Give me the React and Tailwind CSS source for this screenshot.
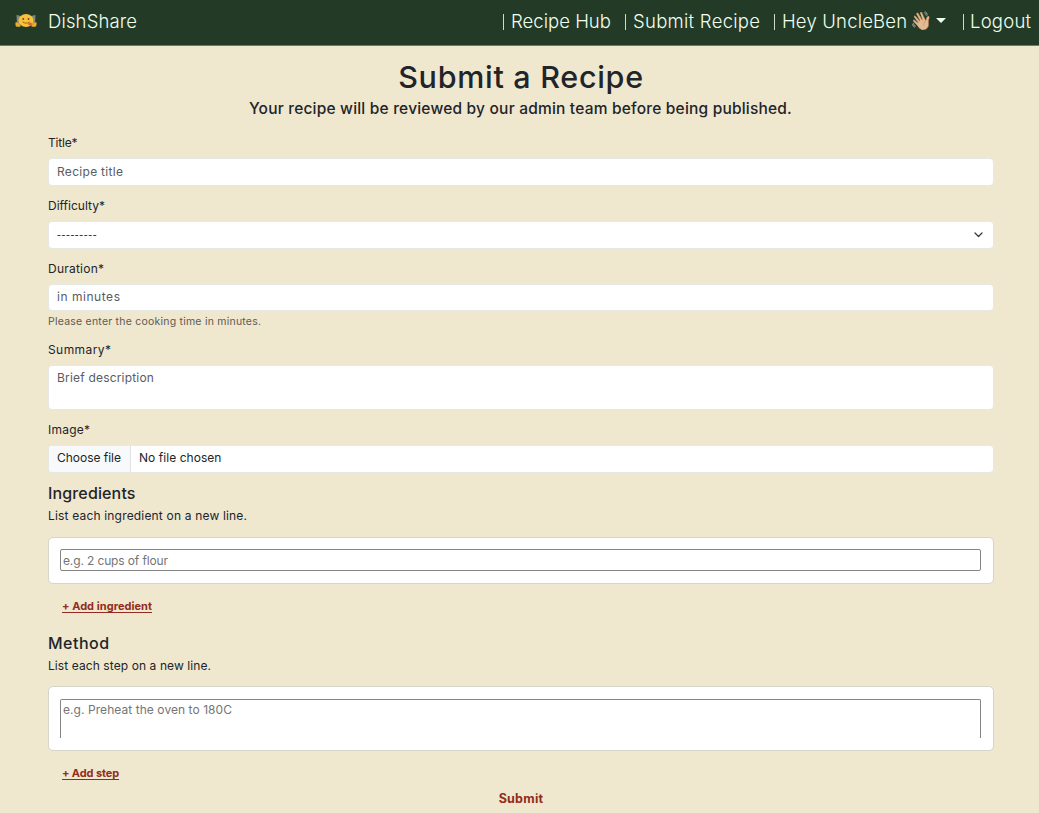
import clsx from 'clsx';

const labelStyle = 'h-5 text-[12px] leading-5 text-[#212529]';
const controlStyle = 'w-full rounded-[4px] border border-[#e6e8e4] bg-white px-2 text-[12px] placeholder:text-[#595c5f] outline-none';

function Logo() {
  return (
    <svg width="22" height="16" viewBox="0 0 22 16" className="mr-[11px] shrink-0">
      <path d="M1.500 2 6 3v8H2zM20.500 2 16 3v8h4z" fill="#7f8c7c" />
      <ellipse cx="11" cy="7.500" rx="7.500" ry="6.500" fill="#f9c23a" />
      <path d="M.5 9.500c1.200-.8 2.600.2 4 1.400 1.600 1.300 1.700 2.600 0 2.900H1.700C.6 13.500.3 12 .5 9.500zM21.500 9.500c-1.200-.8-2.600.2-4 1.400-1.600 1.300-1.700 2.600 0 2.900h2.800c1.100-.3 1.400-1.800 1.200-4.300z" fill="#f3a827" />
      <circle cx="8.300" cy="6" r="0.900" fill="#6b4413" />
      <circle cx="13.500" cy="6" r="0.900" fill="#6b4413" />
      <path d="M7.500 8.800c1.800 1.800 5.200 1.800 7 0" fill="none" stroke="#9a5a18" strokeWidth="0.900" />
      <ellipse cx="15" cy="11" rx="2" ry="1.400" fill="#e2643f" />
    </svg>
  );
}

function NavItem({ children, className }) {
  return (
    <a href="#" className={clsx('flex h-full items-center', className)}>
      <span className="mt-[2px] h-[16px] w-px shrink-0 bg-[#cfdacf]" />
      {children}
    </a>
  );
}

function Header() {
  return (
    <header className="flex h-[46px] items-center border-b border-[#6f7c5c] bg-[#233b26] pb-[3px] text-[18.5px] leading-[26px] font-light whitespace-nowrap text-[#f0fff0]">
      <a href="#" className="flex items-center pl-[15px]">
        <Logo />
        <span className="tracking-[0.14px]">DishShare</span>
      </a>
      <nav className="ml-auto flex h-full items-center">
        <NavItem className="w-[122px]"><span className="ml-[7px] tracking-[0.03px]">Recipe Hub</span></NavItem>
        <NavItem className="w-[149px]"><span className="ml-[7px] tracking-[0.28px]">Submit Recipe</span></NavItem>
        <NavItem className="w-[189px]">
          <span className="ml-[7px] tracking-[0.18px]">Hey UncleBen</span>
          <span className="ml-[3px] w-[23px] text-[18px]">👋🏼</span>
          <svg width="10" height="5" viewBox="0 0 10 5" className="mb-[2px] ml-[3px]"><path d="M0 0h10L5 5z" fill="#f0fff0" /></svg>
        </NavItem>
        <NavItem className="w-[76px]"><span className="ml-[6px] tracking-[0.22px]">Logout</span></NavItem>
      </nav>
    </header>
  );
}

function AddLink({ children, className }) {
  return (
    <a href="#" className={clsx('ml-[14px] block h-5 w-fit text-[11px] leading-5 font-bold text-[#902d20] underline underline-offset-[1.5px]', className)}>
      {children}
    </a>
  );
}

export default function App() {
  return (
    <div className="h-[813px] overflow-hidden bg-[#f0e7cf] font-['Inter',sans-serif] text-[#212529]">
      <Header />
      <main>
        <h1 className="mt-[11px] h-10 pl-[3px] text-center text-[30.5px] leading-10 font-medium tracking-[0.71px]">Submit a Recipe</h1>
        <h2 className="h-6 pl-[2px] text-center text-[15.5px] leading-6 font-medium tracking-[0.2px]">Your recipe will be reviewed by our admin team before being published.</h2>
        <form className="mr-[45px] ml-[48px] flex flex-col" onSubmit={(e) => e.preventDefault()}>
          <label className={clsx(labelStyle, 'mt-3 tracking-[-0.2px]')}>Title*</label>
          <input className={clsx(controlStyle, 'mt-[5px] h-[28px] pb-[2px] tracking-[0.3px]')} placeholder="Recipe title" />

          <label className={clsx(labelStyle, 'mt-[10px] tracking-[0.02px]')}>Difficulty*</label>
          <div className={clsx(controlStyle, 'mt-[5px] flex h-[28px] items-center justify-between pr-[10px]')}>
            <span className="pb-px font-['Open_Sans'] tracking-[0.6px] text-[#30363a]">---------</span>
            <svg width="9" height="6" viewBox="0 0 9 6"><path d="M1 1l3.500 3.500L8 1" fill="none" stroke="#343a40" strokeWidth="1.300" strokeLinecap="round" strokeLinejoin="round" /></svg>
          </div>

          <label className={clsx(labelStyle, 'mt-[10px] tracking-[0.23px]')}>Duration*</label>
          <input className={clsx(controlStyle, 'mt-[5px] h-[27px] pb-[2px] tracking-[0.54px]')} placeholder="in minutes" />
          <p className="mt-px h-5 text-[10.5px] leading-5 tracking-[0.225px] text-[#5d5b53]">Please enter the cooking time in minutes.</p>

          <label className={clsx(labelStyle, 'mt-2 tracking-[0.42px]')}>Summary*</label>
          <textarea className={clsx(controlStyle, 'mt-[5px] h-[45px] resize-none py-[3px] leading-[18px] tracking-[0.19px]')} placeholder="Brief description" />

          <label className={clsx(labelStyle, 'mt-[10px] tracking-[0.23px]')}>Image*</label>
          <div className="mt-[5px] flex h-[28px] overflow-hidden rounded-[4px] border border-[#e6e8e4] bg-white text-[12px] leading-[23px]">
            <span className="w-[82px] border-r border-[#dee2e6] bg-[#f8f9fa] pl-2 tracking-[-0.02px]">Choose file</span>
            <span className="pl-2 tracking-[0.05px]">No file chosen</span>
          </div>

          <h3 className="mt-[10px] h-5 text-[16px] leading-5 font-medium tracking-[0.14px]">Ingredients</h3>
          <p className="mt-[3px] h-5 text-[12px] leading-5 tracking-[0.176px]">List each ingredient on a new line.</p>
          <div className="mt-[11px] h-[47px] rounded-[5px] border border-[#d5d5cb] bg-white px-[11px] pt-[11px]">
            <input className="block h-[22px] w-[921px] rounded-[2px] border border-[#858585] bg-white px-[2px] text-[12px] tracking-[-0.13px] outline-none placeholder:text-[#757575]" placeholder="e.g. 2 cups of flour" />
          </div>
          <AddLink className="mt-[12px] tracking-[0.04px]">+ Add ingredient</AddLink>

          <h3 className="mt-[17px] h-5 text-[16px] leading-5 font-medium tracking-[0.5px]">Method</h3>
          <p className="mt-[3px] h-5 text-[12px] leading-5 tracking-[0.087px]">List each step on a new line.</p>
          <div className="mt-[10px] h-[65px] rounded-[5px] border border-[#d5d5cb] bg-white px-[11px] pt-[12px]">
            <textarea className="block h-[39px] w-[921px] resize-none rounded-t-[2px] border border-b-0 border-[#858585] bg-white px-[2px] py-px text-[12px] leading-[18px] tracking-[0.064px] outline-none placeholder:text-[#757575]" placeholder="e.g. Preheat the oven to 180C" />
          </div>
          <AddLink className="mt-[12px] tracking-[-0.1px]">+ Add step</AddLink>
          <button className="mt-[6px] h-5 self-center text-[12.5px] leading-5 font-bold tracking-[0.25px] text-[#902d20]">Submit</button>
        </form>
      </main>
    </div>
  );
}
